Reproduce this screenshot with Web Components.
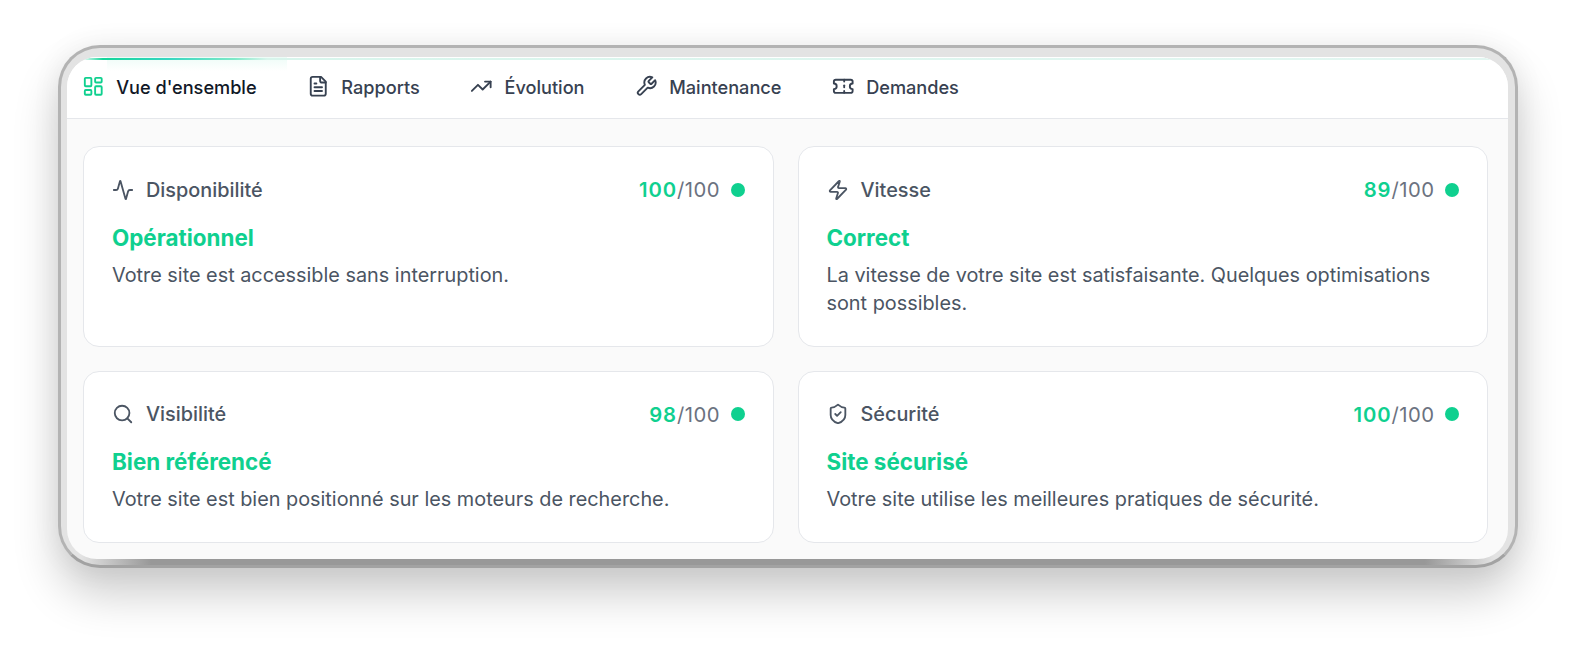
<!DOCTYPE html>
<html lang="fr">
<head>
<meta charset="utf-8">
<title>Vue d'ensemble</title>
<style>
  html, body { margin: 0; background: #fff; }
  body { font-family: Inter, "Liberation Sans", sans-serif; height: 655px; overflow: hidden; }
</style>
</head>
<body>
<app-frame>
  <tab-bar slot="nav">
    <nav-tab icon="dashboard" active>Vue d'ensemble</nav-tab>
    <nav-tab icon="file">Rapports</nav-tab>
    <nav-tab icon="trend">Évolution</nav-tab>
    <nav-tab icon="wrench">Maintenance</nav-tab>
    <nav-tab icon="ticket">Demandes</nav-tab>
  </tab-bar>
  <card-grid>
    <status-card icon="activity" label="Disponibilité" score="100" state="Opérationnel">Votre site est accessible sans interruption.</status-card>
    <status-card icon="zap" label="Vitesse" score="89" state="Correct">La vitesse de votre site est satisfaisante. Quelques optimisations sont possibles.</status-card>
    <status-card icon="search" label="Visibilité" score="98" state="Bien référencé">Votre site est bien positionné sur les moteurs de recherche.</status-card>
    <status-card icon="shield" label="Sécurité" score="100" state="Site sécurisé">Votre site utilise les meilleures pratiques de sécurité.</status-card>
  </card-grid>
</app-frame>

<script>
// icones (traits lucide)
const ICONS = {
  dashboard: '<rect x="3" y="3" width="7" height="9" rx="1"/><rect x="14" y="3" width="7" height="5" rx="1"/><rect x="14" y="12" width="7" height="9" rx="1"/><rect x="3" y="16" width="7" height="5" rx="1"/>',
  file: '<path d="M15 2H6a2 2 0 0 0-2 2v16a2 2 0 0 0 2 2h12a2 2 0 0 0 2-2V7Z"/><path d="M14 2v4a2 2 0 0 0 2 2h4"/><path d="M10 9H8"/><path d="M16 13H8"/><path d="M16 17H8"/>',
  trend: '<polyline points="22 7 13.5 15.5 8.5 10.5 2 17"/><polyline points="16 7 22 7 22 13"/>',
  wrench: '<path d="M14.7 6.3a1 1 0 0 0 0 1.4l1.6 1.6a1 1 0 0 0 1.4 0l3.77-3.77a6 6 0 0 1-7.94 7.94l-6.91 6.91a2.12 2.12 0 0 1-3-3l6.91-6.91a6 6 0 0 1 7.94-7.94l-3.76 3.76z"/>',
  ticket: '<path d="M2 9a3 3 0 0 1 0 6v2a2 2 0 0 0 2 2h16a2 2 0 0 0 2-2v-2a3 3 0 0 1 0-6V7a2 2 0 0 0-2-2H4a2 2 0 0 0-2 2Z"/><path d="M13 5v2"/><path d="M13 17v2"/><path d="M13 11v2"/>',
  activity: '<path d="M22 12h-2.48a2 2 0 0 0-1.93 1.46l-2.35 8.36a.25.25 0 0 1-.48 0L9.24 2.18a.25.25 0 0 0-.48 0l-2.35 8.36A2 2 0 0 1 4.49 12H2"/>',
  zap: '<path d="M4 14a1 1 0 0 1-.78-1.63l9.9-10.2a.5.5 0 0 1 .86.46l-1.92 6.02A1 1 0 0 0 13 10h7a1 1 0 0 1 .78 1.63l-9.9 10.2a.5.5 0 0 1-.86-.46l1.92-6.02A1 1 0 0 0 11 14z"/>',
  search: '<path d="m21 21-4.3-4.3"/><circle cx="11" cy="11" r="8"/>',
  shield: '<path d="M20 13c0 5-3.5 7.5-7.66 8.95a1 1 0 0 1-.67-.01C7.5 20.5 4 18 4 13V6a1 1 0 0 1 1-1c2 0 4.5-1.2 6.24-2.72a1.17 1.17 0 0 1 1.52 0C14.51 3.81 17 5 19 5a1 1 0 0 1 1 1z"/><path d="m9 12 2 2 4-4"/>'
};

function iconSvg(name, size) {
  return `<svg width="${size}" height="${size}" viewBox="0 0 24 24" fill="none" stroke="currentColor" stroke-width="2" stroke-linecap="round" stroke-linejoin="round" aria-hidden="true">${ICONS[name]}</svg>`;
}

class AppFrame extends HTMLElement {
  constructor() {
    super();
    this.attachShadow({ mode: 'open' });
    this.shadowRoot.innerHTML = `
      <style>
        :host {
          display: block;
          box-sizing: border-box;
          width: 1460px;
          height: 523px;
          margin: 45px 0 0 58px;
          padding: 9px 7px 6px 6px;
          border: 3px solid #b3b3b3;
          border-bottom-color: #a2a2a2;
          border-radius: 42px;
          background:
            linear-gradient(90deg, rgba(150,150,150,0) 20px, #989898 90px, #989898 calc(100% - 90px), rgba(150,150,150,0) calc(100% - 20px)) bottom / 100% 9px no-repeat,
            #e3e3e3;
          box-shadow: 0 26px 46px rgba(0,0,0,.2), 0 0 30px rgba(0,0,0,.06);
        }
        .screen {
          position: relative;
          height: 100%;
          background: #fafafa;
          border-radius: 30px;
          overflow: hidden;
        }
        .glow {
          position: absolute;
          top: 1px; left: 0; right: 0;
          height: 1.5px;
          background: linear-gradient(90deg, rgba(20,214,160,0) 14px, #16d59a 36px, #35d6c0 100px, #7fe9c8 168px, #d8f5ec 200px, #e3f6f1 100%);
        }
        .halo {
          position: absolute;
          top: 0; left: 40px;
          width: 180px; height: 14px;
          background: linear-gradient(#e9fbf5, rgba(255,255,255,0));
          opacity: .8;
        }
      </style>
      <div class="screen">
        <slot name="nav"></slot>
        <slot></slot>
        <div class="halo"></div>
        <div class="glow"></div>
      </div>`;
  }
}

class TabBar extends HTMLElement {
  constructor() {
    super();
    this.attachShadow({ mode: 'open' });
    this.shadowRoot.innerHTML = `
      <style>
        :host {
          display: flex;
          align-items: center;
          gap: 50.7px;
          box-sizing: border-box;
          height: 62px;
          padding: 0 0 2px 15.2px;
          background: #fff;
          border-bottom: 1px solid #e5e7eb;
        }
      </style>
      <slot></slot>`;
  }
}

class NavTab extends HTMLElement {
  constructor() {
    super();
    this.attachShadow({ mode: 'open' });
  }
  connectedCallback() {
    const active = this.hasAttribute('active');
    this.shadowRoot.innerHTML = `
      <style>
        :host {
          display: inline-flex;
          align-items: center;
          gap: 11.5px;
          font-size: 18.15px;
          font-weight: 500;
          color: ${active ? '#111827' : '#374151'};
          white-space: nowrap;
        }
        .ico { display: flex; color: ${active ? '#0fd08f' : '#374151'}; }
      </style>
      <span class="ico">${iconSvg(this.getAttribute('icon'), 22.5)}</span>
      <slot></slot>`;
  }
}

class CardGrid extends HTMLElement {
  constructor() {
    super();
    this.attachShadow({ mode: 'open' });
    this.shadowRoot.innerHTML = `
      <style>
        :host {
          display: grid;
          grid-template-columns: 1fr 1fr;
          grid-template-rows: 200.5px 172px;
          gap: 24px;
          padding: 27px 20px 16px 16px;
        }
      </style>
      <slot></slot>`;
  }
}

class StatusCard extends HTMLElement {
  constructor() {
    super();
    this.attachShadow({ mode: 'open' });
  }
  connectedCallback() {
    const a = n => this.getAttribute(n);
    this.shadowRoot.innerHTML = `
      <style>
        :host {
          display: block;
          box-sizing: border-box;
          padding: 28.5px 28px 0 28px;
          background: #fff;
          border: 1px solid #e5e7eb;
          border-radius: 16px;
        }
        header { display: flex; align-items: center; height: 28px; }
        .ico { display: flex; color: #4b5563; margin-right: 12px; }
        .label { font-size: 19.85px; font-weight: 500; color: #4b5563; }
        .score { margin-left: auto; font-size: 20.25px; letter-spacing: .5px; color: #6b7280; }
        .score b { font-weight: 600; letter-spacing: .9px; color: #0fd08f; }
        .dot { width: 14px; height: 14px; border-radius: 50%; background: #0fd08f; margin-left: 10.5px; }
        h3 { margin: 20px 0 0; font-size: 22.4px; line-height: 28px; font-weight: 700; color: #0fd08f; }
        p { margin: 9px 0 0; font-size: 19.85px; line-height: 28px; color: #4b5563; }
      </style>
      <header>
        <span class="ico">${iconSvg(a('icon'), 22)}</span>
        <span class="label">${a('label')}</span>
        <span class="score"><b>${a('score')}</b>/100</span>
        <span class="dot"></span>
      </header>
      <h3>${a('state')}</h3>
      <p><slot></slot></p>`;
  }
}

customElements.define('app-frame', AppFrame);
customElements.define('tab-bar', TabBar);
customElements.define('nav-tab', NavTab);
customElements.define('card-grid', CardGrid);
customElements.define('status-card', StatusCard);
</script>
</body>
</html>
